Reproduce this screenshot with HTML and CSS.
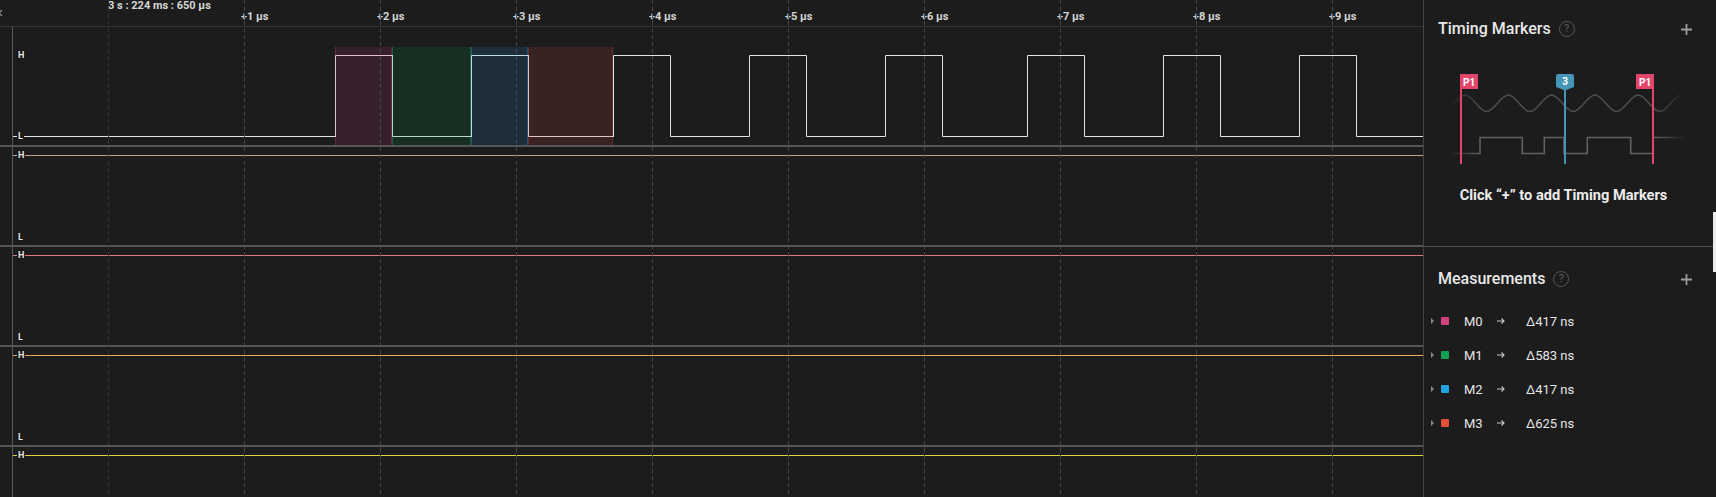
FILE: index.html
```html
<!DOCTYPE html>
<html lang="en">
<head>
  <meta charset="UTF-8" />
  <title>Logic Analyzer</title>
  <link rel="stylesheet" href="styles.css">
</head>
<body>
  <div class="app">
    <div class="scope">
      <div class="ruler">
        <svg class="close-x" width="8" height="8" viewBox="0 0 8 8"><path d="M1 1L7 7M7 1L1 7" /></svg>
        <div class="ruler-origin">3 s : 224 ms : 650 µs</div>
        <div class="ruler-ticks">
          <span>+1 µs</span><span>+2 µs</span><span>+3 µs</span>
          <span>+4 µs</span><span>+5 µs</span><span>+6 µs</span>
          <span>+7 µs</span><span>+8 µs</span><span>+9 µs</span>
        </div>
      </div>

      <div class="channels">
        <!-- channel 0: the clocked signal with measurements -->
        <div class="channel first">
          <svg class="trace" width="1423" height="118">
            <rect x="335" y="20" width="57" height="98" fill="#36202b" />
            <rect x="392" y="20" width="79" height="98" fill="#182e22" />
            <rect x="471" y="20" width="57" height="98" fill="#1d2e3a" />
            <rect x="528" y="20" width="85" height="98" fill="#392322" />
            <path d="M335.5 20V118M391.5 20V118" stroke="#5e2a44" />
            <path d="M392.5 20V118M470.5 20V118" stroke="#1f5e3c" />
            <path d="M471.5 20V118M527.5 20V118" stroke="#26506c" />
            <path d="M528.5 20V118M612.5 20V118" stroke="#6a2c28" />
            <g fill="none" stroke-linecap="square">
              <path d="M13 109.5H335.5" stroke="#e2e2e2" />
              <path d="M335.5 109.5V28.5H392.5" stroke="#e6bfd0" />
              <path d="M392.5 28.5V109.5H471.5" stroke="#b4dcc8" />
              <path d="M471.5 109.5V28.5H528.5" stroke="#bcdcea" />
              <path d="M528.5 28.5V109.5H613.5" stroke="#e4c4c2" />
              <path d="M613.5 109.5V28.5H670.5V109.5H749.5V28.5H806.5V109.5H885.5V28.5H942.5V109.5H1027.5V28.5H1084.5V109.5H1163.5V28.5H1220.5V109.5H1299.5V28.5H1356.5V109.5H1423" stroke="#e2e2e2" />
            </g>
          </svg>
          <span class="lvl ch1-h">H</span>
          <span class="lvl ch1-l">L</span>
        </div>

        <div class="channel">
          <svg class="trace" width="1423" height="98"><path d="M13 8.5H1423" stroke="#c9a08b" /></svg>
          <span class="lvl hi">H</span>
          <span class="lvl lo">L</span>
        </div>

        <div class="channel">
          <svg class="trace" width="1423" height="98"><path d="M13 8.5H1423" stroke="#e07a7a" /></svg>
          <span class="lvl hi">H</span>
          <span class="lvl lo">L</span>
        </div>

        <div class="channel">
          <svg class="trace" width="1423" height="98"><path d="M13 8.5H1423" stroke="#eeaa5c" /></svg>
          <span class="lvl hi">H</span>
          <span class="lvl lo">L</span>
        </div>

        <div class="channel last">
          <svg class="trace" width="1423" height="50"><path d="M13 8.5H1423" stroke="#e4cf3e" /></svg>
          <span class="lvl hi">H</span>
        </div>
      </div>

      <!-- time grid, drawn over the traces -->
      <svg class="grid" width="1423" height="497">
        <g stroke-dasharray="4 3">
          <path d="M108.5 0V497" stroke="#333" />
          <path d="M244.5 0V497M380.5 0V497M516.5 0V497M652.5 0V497M788.5 0V497M924.5 0V497M1060.5 0V497M1196.5 0V497M1332.5 0V497" stroke="#474747" />
        </g>
        <path d="M12.5 27V497" stroke="#58585c" />
      </svg>
    </div>

    <aside class="panel">
      <div class="panel-body">
        <section class="markers">
          <div class="section-head">
            <h3>Timing Markers</h3>
            <span class="help">?</span>
            <svg class="add" width="11" height="11" viewBox="0 0 11 11"><path d="M5.5 0V11M0 5.5H11" /></svg>
          </div>

          <svg class="marker-art" width="240" height="92" viewBox="0 0 240 92">
            <defs>
              <linearGradient id="fade" gradientUnits="userSpaceOnUse" x1="0" y1="0" x2="240" y2="0">
                <stop offset="0" stop-color="#1c1c1c" stop-opacity="1" />
                <stop offset="0.14" stop-color="#1c1c1c" stop-opacity="0" />
                <stop offset="0.86" stop-color="#1c1c1c" stop-opacity="0" />
                <stop offset="1" stop-color="#1c1c1c" stop-opacity="1" />
              </linearGradient>
            </defs>
            <path fill="none" stroke="#4f4f4f" stroke-width="1.5" d="M-4.65 38.6C3.14 38.6 9.21 22 17 22S30.86 38.6 38.65 38.6S52.51 22 60.3 22S74.16 38.6 81.95 38.6S95.81 22 103.6 22S117.46 38.6 125.25 38.6S139.11 22 146.9 22S160.76 38.6 168.55 38.6S182.41 22 190.2 22S204.06 38.6 211.85 38.6S225.71 22 233.5 22" />
            <path fill="none" stroke="#606060" stroke-width="1.6" d="M0 80.5H32V64.5H74.3V80.5H96.3V64.5H116V80.5H139.3V64.5H182.7V80.5H205.3V64.5H240" />
            <rect x="0" y="0" width="240" height="92" fill="url(#fade)" />

            <rect x="12" y="1" width="2" height="90" fill="#e1466a" />
            <rect x="12" y="1" width="18" height="15" fill="#e1466a" />
            <text x="15" y="12.5" class="flag-text">P1</text>

            <rect x="116" y="1" width="2" height="90" fill="#4596b6" />
            <path d="M110 1H124Q126 1 126 3V14L117 17.5L108 14V3Q108 1 110 1Z" fill="#4596b6" />
            <text x="117" y="12" class="flag-text" text-anchor="middle">3</text>

            <rect x="204" y="1" width="2" height="90" fill="#e1466a" />
            <rect x="188" y="1" width="18" height="15" fill="#e1466a" />
            <text x="191" y="12.5" class="flag-text">P1</text>
          </svg>

          <p class="hint">Click “+” to add Timing Markers</p>
        </section>

        <section class="measurements">
          <div class="section-head">
            <h3>Measurements</h3>
            <span class="help">?</span>
            <svg class="add" width="11" height="11" viewBox="0 0 11 11"><path d="M5.5 0V11M0 5.5H11" /></svg>
          </div>

          <div class="m-list">
            <div class="m-row">
              <span class="caret"></span><span class="swatch m0"></span>
              <span class="m-name">M0</span>
              <svg class="arrow" width="8" height="6" viewBox="0 0 8 6"><path d="M0 3H7M4.5 0.5L7 3L4.5 5.5" /></svg>
              <span class="m-value">Δ417 ns</span>
            </div>
            <div class="m-row">
              <span class="caret"></span><span class="swatch m1"></span>
              <span class="m-name">M1</span>
              <svg class="arrow" width="8" height="6" viewBox="0 0 8 6"><path d="M0 3H7M4.5 0.5L7 3L4.5 5.5" /></svg>
              <span class="m-value">Δ583 ns</span>
            </div>
            <div class="m-row">
              <span class="caret"></span><span class="swatch m2"></span>
              <span class="m-name">M2</span>
              <svg class="arrow" width="8" height="6" viewBox="0 0 8 6"><path d="M0 3H7M4.5 0.5L7 3L4.5 5.5" /></svg>
              <span class="m-value">Δ417 ns</span>
            </div>
            <div class="m-row">
              <span class="caret"></span><span class="swatch m3"></span>
              <span class="m-name">M3</span>
              <svg class="arrow" width="8" height="6" viewBox="0 0 8 6"><path d="M0 3H7M4.5 0.5L7 3L4.5 5.5" /></svg>
              <span class="m-value">Δ625 ns</span>
            </div>
          </div>
        </section>
      </div>
      <div class="scrollbar"><div class="thumb"></div></div>
    </aside>
  </div>
</body>
</html>
```

FILE: styles.css
```css
* {
  box-sizing: border-box;
}
body {
  margin: 0;
  background: #1c1c1c;
  font-family: Roboto, "Liberation Sans", sans-serif;
  color: #e4e4e4;
  overflow: hidden;
}
.app {
  display: flex;
  width: 1716px;
  height: 497px;
}

/* waveform area */
.scope {
  position: relative;
  flex: none;
  width: 1423px;
  height: 497px;
  overflow: hidden;
}
.ruler {
  position: relative;
  height: 27px;
  border-bottom: 1px solid #353535;
  font-size: 11px;
  font-weight: 700;
  line-height: 11px;
  color: #d6d6d6;
  white-space: nowrap;
}
.close-x {
  position: absolute;
  left: -5px;
  top: 9px;
  fill: none;
  stroke: #8a8a8a;
  stroke-width: 1.3;
}
.ruler-origin {
  padding-left: 108px;
}
.ruler-ticks {
  display: flex;
  padding-left: 241px;
}
.ruler-ticks span {
  flex: none;
  width: 136px;
}
.channel {
  position: relative;
  height: 100px;
  border-bottom: 2px solid #56565a;
}
.channel.first {
  height: 120px;
}
.channel.last {
  height: 50px;
  border-bottom: 0;
}
.trace {
  display: block;
}
.lvl {
  position: absolute;
  left: 17px;
  padding: 0 1px;
  font-size: 9px;
  font-weight: 700;
  line-height: 9px;
  color: #e6e6e6;
  background: #1c1c1c;
  text-shadow: 0 0 2px #000;
}
.lvl.hi { top: 4px; }
.lvl.lo { top: 86px; }
.lvl.ch1-h { top: 24px; background: none; }
.lvl.ch1-l { top: 105px; }
.grid {
  position: absolute;
  left: 0;
  top: 0;
  pointer-events: none;
}

/* side panel */
.panel {
  flex: none;
  display: flex;
  width: 293px;
  border-left: 1px solid #444;
}
.panel-body {
  width: 289px;
}
.scrollbar {
  width: 3px;
}
.thumb {
  margin-top: 212px;
  height: 60px;
  background: #ededed;
}
.markers {
  height: 247px;
  padding-top: 19px;
  border-bottom: 1px solid #4a4a4a;
}
.measurements {
  padding-top: 22px;
}
.section-head {
  display: flex;
  align-items: center;
  height: 20px;
  padding: 0 21px 0 14px;
}
.section-head h3 {
  margin: 0;
  font-size: 16px;
  font-weight: 500;
  line-height: 20px;
  color: #e8e8e8;
}
.help {
  width: 16px;
  height: 16px;
  margin-left: 8px;
  border: 1.3px solid #555;
  border-radius: 50%;
  font-size: 11px;
  line-height: 13px;
  text-align: center;
  color: #5c5c5c;
}
.add {
  margin-left: auto;
  fill: none;
  stroke: #9b9b9b;
  stroke-width: 1.8;
}
.marker-art {
  display: block;
  margin: 34px 0 0 24px;
}
.flag-text {
  font-family: Roboto, "Liberation Sans", sans-serif;
  font-size: 10px;
  font-weight: 700;
  fill: #fff;
}
.hint {
  margin: 22px 0 0;
  padding-right: 10px;
  font-size: 14.6px;
  font-weight: 700;
  line-height: 16px;
  text-align: center;
  color: #ececec;
}
.m-list {
  margin-top: 15px;
}
.m-row {
  display: flex;
  align-items: center;
  height: 34px;
  padding-left: 7px;
  font-size: 13px;
  color: #e4e4e4;
}
.caret {
  width: 0;
  height: 0;
  border-left: 3px solid #8a8a8a;
  border-top: 3px solid transparent;
  border-bottom: 3px solid transparent;
}
.swatch {
  width: 8px;
  height: 8px;
  margin-left: 7px;
  border-radius: 1px;
}
.swatch.m0 { background: #d3427f; }
.swatch.m1 { background: #12a153; }
.swatch.m2 { background: #22a2de; }
.swatch.m3 { background: #e0513a; }
.m-name {
  width: 33px;
  margin-left: 15px;
}
.arrow {
  fill: none;
  stroke: #c8c8c8;
  stroke-width: 1.1;
}
.m-value {
  margin-left: 21px;
}
```
